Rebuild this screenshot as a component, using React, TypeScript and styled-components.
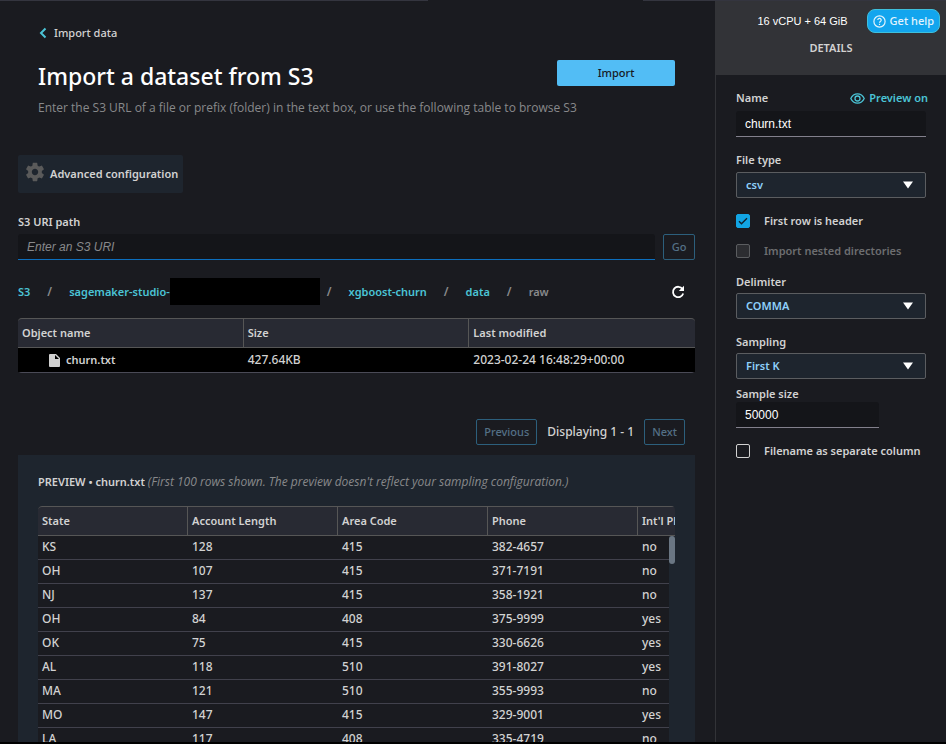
import React from "react";
import styled, { createGlobalStyle, css } from "styled-components";

const color = {
  page: "#1a1b20",
  panel: "#1e252e",
  field: "#141519",
  head: "#282a33",
  line: "#565656",
  rowLine: "#41414c",
  text: "#d2d2d2",
  muted: "#88898b",
  teal: "#4bc4d6",
  blue: "#52bdf5",
  selectText: "#8ed0fa",
};

const GlobalStyle = createGlobalStyle`
  * { box-sizing: border-box; }
  body {
    margin: 0;
    background: ${color.page};
    color: ${color.text};
    font: 600 11px/16px "Noto Sans", "Open Sans", sans-serif;
  }
  button, select, input { font: inherit; margin: 0; }
  a { text-decoration: none; }
`;

const Page = styled.div`
  display: flex;
  flex-direction: column;
  height: 100vh;
  overflow: hidden;
  border-bottom: 2px solid #000;
`;

const TabEdge = styled.div`
  display: grid;
  grid-template-columns: 428fr 215fr 303fr;
  flex: none;
  height: 1px;
`;

const EdgeSegment = styled.span<{ $open?: boolean }>`
  background: ${(p) => (p.$open ? color.page : "#34353f")};
`;

const Columns = styled.div`
  display: flex;
  flex: 1;
  min-height: 0;
`;

const Main = styled.main`
  display: flex;
  flex-direction: column;
  flex: 1;
  min-width: 0;
  padding: 24px 20px 0 18px;
`;

const Intro = styled.header`
  padding: 0 20px;
`;

const BackLink = styled.a`
  display: inline-flex;
  align-items: center;
  gap: 6px;
  color: ${color.text};
  font-weight: 500;
`;

const TitleRow = styled.div`
  display: flex;
  align-items: center;
  justify-content: space-between;
  margin-top: 16px;
`;

const Title = styled.h1`
  margin: 0;
  color: #fff;
  font-size: 23px;
  font-weight: 500;
  line-height: 34px;
`;

const ImportButton = styled.button`
  width: 118px;
  height: 26px;
  margin-bottom: 6px;
  border: 0;
  border-radius: 2px;
  background: ${color.blue};
  color: #16191f;
  font-weight: 500;
`;

const Description = styled.p`
  margin: 7px 0 0;
  color: ${color.muted};
  font-family: "Open Sans", "Noto Sans", sans-serif;
  font-size: 12px;
  font-weight: 500;
`;

const AdvancedButton = styled.button`
  display: flex;
  align-items: center;
  align-self: flex-start;
  gap: 4px;
  height: 38px;
  margin-top: 39px;
  padding: 0 5px 0 6px;
  border: 0;
  border-radius: 2px;
  background: ${color.panel};
  color: ${color.text};

  svg { margin-bottom: 4px; }
`;

const UriLabel = styled.label`
  margin-top: 21px;
`;

const UriRow = styled.form`
  display: flex;
  gap: 8px;
  margin-top: 4px;
`;

const TextInput = styled.input<{ $accent?: boolean; $narrow?: boolean }>`
  flex: 1;
  width: ${(p) => (p.$narrow ? "75%" : "100%")};
  min-width: 0;
  height: 26px;
  padding: 0 9px;
  border: 0;
  border-bottom: 1px solid ${(p) => (p.$accent ? "#0c6ebd" : "#82808c")};
  border-radius: 3px 3px 0 0;
  outline: 0;
  background: ${color.field};
  color: #fff;
  font: 12px "Liberation Sans", Arial, sans-serif;

  &::placeholder {
    color: ${color.muted};
    font-style: italic;
    opacity: 1;
  }
`;

const OutlineButton = styled.button`
  min-width: 32px;
  height: 26px;
  padding: 0 7px;
  border: 1px solid #2c5f7c;
  border-radius: 2px;
  background: transparent;
  color: #547086;
  font-weight: 500;
`;

const Breadcrumbs = styled.nav`
  display: flex;
  align-items: center;
  gap: 17px;
  height: 27px;
  margin-top: 18px;
`;

const Crumb = styled.a`
  color: ${color.teal};
`;

const BucketCrumb = styled.span`
  display: flex;
  align-items: center;
  margin-right: -10px;
`;

const Redaction = styled.span`
  width: 150px;
  height: 27px;
  background: #000;
`;

const Slash = styled.span`
  color: ${color.muted};
  font-size: 12px;
`;

const CurrentCrumb = styled.span`
  color: ${color.muted};
`;

const IconButton = styled.button`
  display: grid;
  place-items: center;
  margin-left: auto;
  margin-right: 8px;
  padding: 0;
  border: 0;
  background: none;
  color: #fff;
`;

const DataTable = styled.table`
  width: 100%;
  border-collapse: separate;
  border-spacing: 0;
  table-layout: fixed;
`;

const FileTable = styled(DataTable)`
  flex: none;
  margin-top: 13px;
  border-bottom: 1px solid #4a4a56;
  border-radius: 4px;
`;

const HeadCell = styled.th`
  height: 30px;
  padding: 0 4px;
  border-top: 1px solid ${color.line};
  border-bottom: 1px solid ${color.line};
  background: ${color.head};
  font-weight: 600;
  text-align: left;
  white-space: nowrap;

  &:not(:last-child) { border-right: 1px solid ${color.line}; }
  &:first-child { border-top-left-radius: 4px; }
  &:last-child { border-top-right-radius: 4px; }
`;

const cell = css`
  height: 24px;
  padding: 0 4px;
  font-size: 12px;
  font-weight: 500;
  white-space: nowrap;
`;

const FileCell = styled.td`
  ${cell}
  background: #000;
`;

const FileName = styled.span`
  display: flex;
  align-items: center;
  gap: 6px;
  padding-left: 27px;
  font-size: 11px;
  font-weight: 600;
`;

const DataCell = styled.td`
  ${cell}
  padding-bottom: 1px;
  border-bottom: 1px solid ${color.rowLine};
  background: ${color.page};
`;

const Pagination = styled.div`
  display: flex;
  align-items: center;
  justify-content: flex-end;
  gap: 10px;
  margin: 46px 10px 0 0;
`;

const PageStatus = styled.span`
  font-size: 12px;
  font-weight: 500;
`;

const Preview = styled.section`
  display: flex;
  flex-direction: column;
  flex: 1;
  min-height: 0;
  margin-top: 10px;
  padding: 19px 20px 0;
  background: ${color.panel};
`;

const PreviewTitle = styled.h2`
  margin: 0 0 16px;
  font-size: 11px;
  font-weight: 600;
  line-height: 16px;

  em {
    color: ${color.muted};
    font-family: "Open Sans", "Noto Sans", sans-serif;
    font-size: 12px;
    font-weight: 500;
  }
`;

const PreviewViewport = styled.div`
  position: relative;
  flex: 1;
  min-height: 0;
  overflow: hidden;
  border-radius: 4px 4px 0 0;
`;

const PreviewTable = styled(DataTable)`
  width: 750px;
`;

const ScrollTrack = styled.div`
  position: absolute;
  top: 30px;
  right: 0;
  bottom: 0;
  width: 6px;
  background: ${color.panel};
`;

const ScrollThumb = styled.div`
  height: 28px;
  border-radius: 3px;
  background: #6a7683;
`;

const Aside = styled.aside`
  flex: none;
  width: 231px;
  border-left: 1px solid #323337;
`;

const AsideHead = styled.header`
  display: flex;
  flex-direction: column;
  align-items: center;
  height: 74px;
  padding-top: 8px;
  background: #323337;
`;

const InstanceRow = styled.div`
  display: flex;
  align-items: center;
  align-self: flex-end;
  gap: 19px;
  padding-right: 6px;
  color: #fff;
  font: 11px/16px "Liberation Sans", Arial, sans-serif;
`;

const HelpButton = styled.button`
  display: flex;
  align-items: center;
  gap: 4px;
  height: 24px;
  padding: 0 5px;
  border: 1px solid #3fc0dc;
  border-radius: 8px;
  background: #12a5ee;
  color: #e4f4fd;
  font: 500 11px/16px "Noto Sans", "Open Sans", sans-serif;
`;

const AsideTitle = styled.h2`
  margin: 7px 0 0;
  font-size: 11px;
  font-weight: 600;
  line-height: 16px;
`;

const Details = styled.form`
  padding: 15px 20px;
`;

const LabelRow = styled.div`
  display: flex;
  justify-content: space-between;
  margin-right: -2px;
`;

const Label = styled.label`
  display: block;
`;

const PreviewToggle = styled.button`
  display: flex;
  align-items: center;
  gap: 4px;
  padding: 0;
  border: 0;
  background: none;
  color: ${color.teal};
`;

const Field = styled.div<{ $gap?: number; $inner?: number }>`
  margin-top: ${(p) => p.$gap ?? 0}px;

  & > :last-child { margin-top: ${(p) => p.$inner ?? 4}px; }
`;

const SelectBox = styled.div`
  display: grid;
  align-items: center;

  & > * { grid-area: 1 / 1; }
  svg {
    justify-self: end;
    margin-right: 13px;
    pointer-events: none;
  }
`;

const Select = styled.select`
  appearance: none;
  width: 100%;
  height: 26px;
  padding: 0 9px;
  border: 1px solid #5b5d60;
  border-radius: 2px;
  background: ${color.panel};
  color: ${color.selectText};
`;

const CheckRow = styled.label<{ $gap: number; $disabled?: boolean }>`
  display: flex;
  align-items: center;
  gap: 14px;
  margin-top: ${(p) => p.$gap}px;
  color: ${(p) => (p.$disabled ? "#6d6e70" : color.text)};
  white-space: nowrap;
`;

const CheckBox = styled.span`
  display: grid;
  place-items: center;

  & > * { grid-area: 1 / 1; }
  svg { pointer-events: none; }
`;

const CheckInput = styled.input`
  appearance: none;
  width: 14px;
  height: 14px;
  border: 1px solid ${color.text};
  border-radius: 2px;

  &:checked { border-color: #12a5e4; background: #12a5e4; }
  &:disabled { border-color: #5b5d60; background: #2c2d31; }
`;

const GearIcon = () => (
  <svg width="22" height="22" viewBox="0 0 24 24" fill="#5a5a5a" aria-hidden="true">
    <path d="M19.43 12.98c.04-.32.07-.64.07-.98s-.03-.66-.07-.98l2.11-1.65c.19-.15.24-.42.12-.64l-2-3.46c-.12-.22-.39-.3-.61-.22l-2.49 1c-.52-.4-1.08-.73-1.69-.98l-.38-2.65C14.46 2.18 14.25 2 14 2h-4c-.25 0-.46.18-.49.42l-.38 2.65c-.61.25-1.17.59-1.69.98l-2.49-1c-.23-.09-.49 0-.61.22l-2 3.46c-.13.22-.07.49.12.64l2.11 1.65c-.04.32-.07.65-.07.98s.03.66.07.98l-2.11 1.65c-.19.15-.24.42-.12.64l2 3.46c.12.22.39.3.61.22l2.49-1c.52.4 1.08.73 1.69.98l.38 2.65c.03.24.24.42.49.42h4c.25 0 .46-.18.49-.42l.38-2.65c.61-.25 1.17-.59 1.69-.98l2.49 1c.23.09.49 0 .61-.22l2-3.46c.12-.22.07-.49-.12-.64l-2.11-1.65zM12 15.5c-1.93 0-3.5-1.57-3.5-3.5s1.57-3.5 3.5-3.5 3.5 1.57 3.5 3.5-1.57 3.5-3.5 3.5z" />
  </svg>
);

const ChevronIcon = () => (
  <svg width="10" height="12" viewBox="0 0 10 12" fill="none" stroke={color.teal} strokeWidth="2" aria-hidden="true">
    <path d="M7.500 1.500 3 6l4.500 4.500" />
  </svg>
);

const FileIcon = () => (
  <svg width="11" height="13" viewBox="0 0 11 13" aria-hidden="true">
    <path d="M1 0h6l4 4v8a1 1 0 0 1-1 1H1a1 1 0 0 1-1-1V1a1 1 0 0 1 1-1z" fill={color.text} />
    <path d="M6 1v4h4z" fill="#000" />
  </svg>
);

const RefreshIcon = () => (
  <svg width="18" height="18" viewBox="0 0 18 18" aria-hidden="true">
    <path d="M13.500 6A5.200 5.200 0 1 0 14.200 10.500" fill="none" stroke="#fff" strokeWidth="1.800" />
    <path d="M15 2.800V8H9.800z" fill="#fff" />
  </svg>
);

const HelpIcon = () => (
  <svg width="13" height="13" viewBox="0 0 13 13" fill="none" stroke="#e4f4fd" strokeWidth="1.200" aria-hidden="true">
    <circle cx="6.500" cy="6.500" r="5.600" />
    <path d="M4.800 5.100a1.700 1.700 0 1 1 2.500 1.500c-.6.300-.8.600-.8 1.200" />
    <path d="M6.500 8.800v1.200" />
  </svg>
);

const EyeIcon = () => (
  <svg width="15" height="11" viewBox="0 0 15 11" fill="none" stroke={color.teal} strokeWidth="1.300" aria-hidden="true">
    <path d="M.8 5.500C2.200 2.500 4.600.9 7.500.9s5.300 1.600 6.700 4.600c-1.400 3-3.800 4.600-6.700 4.600S2.200 8.500.8 5.500z" />
    <circle cx="7.500" cy="5.500" r="2.500" />
  </svg>
);

const CaretIcon = () => (
  <svg width="10" height="8" viewBox="0 0 10 8" aria-hidden="true">
    <path d="M0 .5h10L5 7.500z" fill="#fff" />
  </svg>
);

const TickIcon = () => (
  <svg width="10" height="8" viewBox="0 0 10 8" fill="none" stroke="#10212c" strokeWidth="1.400" aria-hidden="true">
    <path d="M1 4.200 3.500 6.700 9 1.200" />
  </svg>
);

const previewColumns = ["State", "Account Length", "Area Code", "Phone", "Int'l Plan"];

const previewRows = [
  ["KS", "128", "415", "382-4657", "no"],
  ["OH", "107", "415", "371-7191", "no"],
  ["NJ", "137", "415", "358-1921", "no"],
  ["OH", "84", "408", "375-9999", "yes"],
  ["OK", "75", "415", "330-6626", "yes"],
  ["AL", "118", "510", "391-8027", "yes"],
  ["MA", "121", "510", "355-9993", "no"],
  ["MO", "147", "415", "329-9001", "yes"],
  ["LA", "117", "408", "335-4719", "no"],
];

type SelectFieldProps = { id: string; label: string; value: string; gap: number; inner?: number };

const SelectField = ({ id, label, value, gap, inner }: SelectFieldProps) => (
  <Field $gap={gap} $inner={inner}>
    <Label htmlFor={id}>{label}</Label>
    <SelectBox>
      <Select id={id} defaultValue={value}>
        <option>{value}</option>
      </Select>
      <CaretIcon />
    </SelectBox>
  </Field>
);

type CheckFieldProps = { label: string; gap: number; checked?: boolean; disabled?: boolean };

const CheckField = ({ label, gap, checked, disabled }: CheckFieldProps) => (
  <CheckRow $gap={gap} $disabled={disabled}>
    <CheckBox>
      <CheckInput type="checkbox" defaultChecked={checked} disabled={disabled} />
      {checked && <TickIcon />}
    </CheckBox>
    {label}
  </CheckRow>
);

export default function App() {
  return (
    <>
      <GlobalStyle />
      <Page>
        <TabEdge>
          <EdgeSegment />
          <EdgeSegment $open />
          <EdgeSegment />
        </TabEdge>
        <Columns>
          <Main>
            <Intro>
              <BackLink href="#import">
                <ChevronIcon />
                Import data
              </BackLink>
              <TitleRow>
                <Title>Import a dataset from S3</Title>
                <ImportButton type="button">Import</ImportButton>
              </TitleRow>
              <Description>
                Enter the S3 URL of a file or prefix (folder) in the text box, or use the following table to browse S3
              </Description>
            </Intro>

            <AdvancedButton type="button">
              <GearIcon />
              Advanced configuration
            </AdvancedButton>

            <UriLabel htmlFor="uri">S3 URI path</UriLabel>
            <UriRow>
              <TextInput id="uri" $accent placeholder="Enter an S3 URI" />
              <OutlineButton type="button">Go</OutlineButton>
            </UriRow>

            <Breadcrumbs aria-label="Path">
              <Crumb href="#s3">S3</Crumb>
              <Slash>/</Slash>
              <BucketCrumb>
                <Crumb href="#bucket">sagemaker-studio-</Crumb>
                <Redaction />
              </BucketCrumb>
              <Slash>/</Slash>
              <Crumb href="#churn">xgboost-churn</Crumb>
              <Slash>/</Slash>
              <Crumb href="#data">data</Crumb>
              <Slash>/</Slash>
              <CurrentCrumb>raw</CurrentCrumb>
              <IconButton type="button" aria-label="Refresh">
                <RefreshIcon />
              </IconButton>
            </Breadcrumbs>

            <FileTable>
              <thead>
                <tr>
                  <HeadCell>Object name</HeadCell>
                  <HeadCell>Size</HeadCell>
                  <HeadCell>Last modified</HeadCell>
                </tr>
              </thead>
              <tbody>
                <tr>
                  <FileCell>
                    <FileName>
                      <FileIcon />
                      churn.txt
                    </FileName>
                  </FileCell>
                  <FileCell>427.64KB</FileCell>
                  <FileCell>2023-02-24 16:48:29+00:00</FileCell>
                </tr>
              </tbody>
            </FileTable>

            <Pagination>
              <OutlineButton type="button">Previous</OutlineButton>
              <PageStatus>Displaying 1 - 1</PageStatus>
              <OutlineButton type="button">Next</OutlineButton>
            </Pagination>

            <Preview>
              <PreviewTitle>
                PREVIEW • churn.txt <em>(First 100 rows shown. The preview doesn't reflect your sampling configuration.)</em>
              </PreviewTitle>
              <PreviewViewport>
                <PreviewTable>
                  <thead>
                    <tr>
                      {previewColumns.map((name) => (
                        <HeadCell key={name}>{name}</HeadCell>
                      ))}
                    </tr>
                  </thead>
                  <tbody>
                    {previewRows.map((row) => (
                      <tr key={row[3]}>
                        {row.map((value, i) => (
                          <DataCell key={i}>{value}</DataCell>
                        ))}
                      </tr>
                    ))}
                  </tbody>
                </PreviewTable>
                <ScrollTrack>
                  <ScrollThumb />
                </ScrollTrack>
              </PreviewViewport>
            </Preview>
          </Main>

          <Aside>
            <AsideHead>
              <InstanceRow>
                16 vCPU + 64 GiB
                <HelpButton type="button">
                  <HelpIcon />
                  Get help
                </HelpButton>
              </InstanceRow>
              <AsideTitle>DETAILS</AsideTitle>
            </AsideHead>
            <Details>
              <Field $inner={5}>
                <LabelRow>
                  <Label htmlFor="name">Name</Label>
                  <PreviewToggle type="button">
                    <EyeIcon />
                    Preview on
                  </PreviewToggle>
                </LabelRow>
                <TextInput id="name" defaultValue="churn.txt" />
              </Field>
              <SelectField id="type" label="File type" value="csv" gap={15} />
              <CheckField label="First row is header" gap={15} checked />
              <CheckField label="Import nested directories" gap={14} disabled />
              <SelectField id="delimiter" label="Delimiter" value="COMMA" gap={15} inner={3} />
              <SelectField id="sampling" label="Sampling" value="First K" gap={15} inner={3} />
              <Field $gap={7} $inner={0}>
                <Label htmlFor="size">Sample size</Label>
                <TextInput id="size" $narrow defaultValue="50000" />
              </Field>
              <CheckField label="Filename as separate column" gap={15} />
            </Details>
          </Aside>
        </Columns>
      </Page>
    </>
  );
}
